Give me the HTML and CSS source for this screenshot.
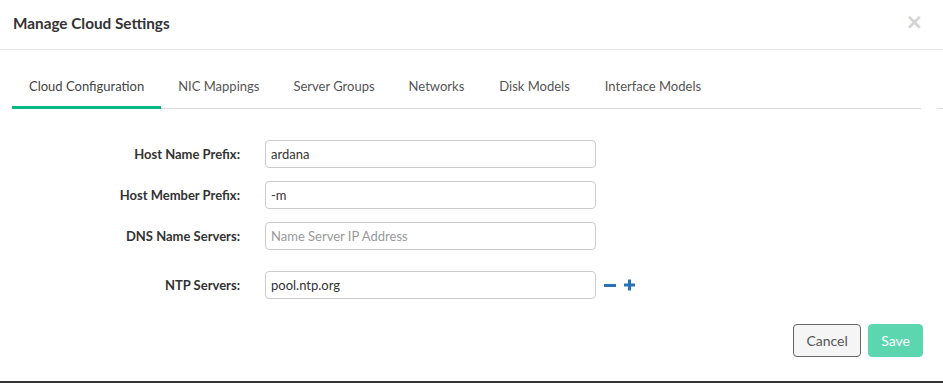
FILE: index.html
```html
<!DOCTYPE html>
<html lang="en">
<head>
  <meta charset="UTF-8" />
  <title>Manage Cloud Settings</title>
  <link rel="stylesheet" href="styles.css">
</head>
<body>
  <div class="modal">
    <div class="modal-header">
      <h4 class="modal-title">Manage Cloud Settings</h4>
      <span class="close">&times;</span>
    </div>

    <div class="tabs">
      <div class="tab active">Cloud Configuration</div>
      <div class="tab">NIC Mappings</div>
      <div class="tab">Server Groups</div>
      <div class="tab">Networks</div>
      <div class="tab">Disk Models</div>
      <div class="tab">Interface Models</div>
    </div>

    <div class="form">
      <label class="form-label">Host Name Prefix:</label>
      <input class="form-input" type="text" value="ardana">

      <label class="form-label">Host Member Prefix:</label>
      <input class="form-input" type="text" value="-m">

      <label class="form-label">DNS Name Servers:</label>
      <input class="form-input" type="text" placeholder="Name Server IP Address">

      <label class="form-label ntp">NTP Servers:</label>
      <div class="ntp-row">
        <input class="form-input" type="text" value="pool.ntp.org">
        <span class="icon-btn">
          <svg width="12" height="12" viewBox="0 0 12 12"><rect x="0" y="5" width="12" height="3" fill="#2a72b5"/></svg>
        </span>
        <span class="icon-btn">
          <svg width="12" height="12" viewBox="0 0 12 12"><rect x="0" y="4.5" width="11" height="3" fill="#2a72b5"/><rect x="4" y="0.5" width="3" height="11" fill="#2a72b5"/></svg>
        </span>
      </div>
    </div>

    <div class="footer">
      <button class="btn btn-cancel">Cancel</button>
      <button class="btn btn-save">Save</button>
    </div>
  </div>
</body>
</html>
```

FILE: styles.css
```css
body {
  margin: 0;
  font-family: Lato, "Open Sans", sans-serif;
  color: #333;
  background: #fff;
}

.modal {
  width: 943px;
  height: 383px;
  box-sizing: border-box;
  border-bottom: 2px solid #333;
  position: relative;
}

.modal-header {
  height: 50px;
  box-sizing: border-box;
  border-bottom: 1px solid #e5e5e5;
  display: flex;
  align-items: center;
  justify-content: space-between;
  padding: 0 20px 4px 13px;
}

.modal-title {
  margin: 0;
  font-size: 15.3px;
  font-weight: bold;
  color: #333;
}

.close {
  font-size: 21px;
  color: #c8c8c8;
  line-height: 1;
  font-family: "DejaVu Sans", sans-serif;
  font-weight: bold;
  opacity: 0.8;
}

.tabs {
  display: flex;
  margin: 16px 22px 0 12px;
  border-bottom: 1px solid #dcdcdc;
  position: relative;
}

.tabs::after {
  content: "";
  position: absolute;
  right: -22px;
  bottom: -1px;
  width: 6px;
  height: 1px;
  background: #dcdcdc;
}

.tab {
  padding: 12px 17px 12px;
  font-size: 13px;
  color: #555;
  border-bottom: 3px solid transparent;
  margin-bottom: -1px;
}

.tab:nth-child(n+5) {
  margin-left: 1px;
}

.tab.active {
  border-bottom-color: #00b982;
  color: #444;
}

.form {
  display: grid;
  grid-template-columns: 227px auto;
  column-gap: 25px;
  row-gap: 13px;
  align-items: center;
  margin: 31px 0 0 13px;
}

.form-label {
  text-align: right;
  font-size: 13px;
  font-weight: bold;
  color: #333;
}

.form-label.ntp,
.ntp-row {
  margin-top: 8px;
}

.form-input {
  width: 331px;
  height: 28px;
  box-sizing: border-box;
  border: 1px solid #ccc;
  border-radius: 4px;
  padding: 0 5px;
  font-family: Lato, sans-serif;
  font-size: 13px;
  color: #333;
}

.form-input::placeholder {
  color: #999;
}

.ntp-row {
  display: flex;
  align-items: center;
}

.icon-btn {
  display: flex;
  margin-left: 8px;
}

.footer {
  display: flex;
  justify-content: flex-end;
  gap: 7px;
  margin: 25px 20px 0 0;
}

.btn {
  height: 33px;
  border-radius: 4px;
  font-family: Lato, sans-serif;
  font-size: 14px;
  padding: 0 13px;
}

.btn-cancel {
  background: #f5f5f5;
  border: 1px solid #666;
  color: #555;
  padding: 0 12.5px;
}

.btn-save {
  background: #5cd6ae;
  border: 1px solid #5cd6ae;
  color: #fff;
  padding: 0 12px;
}
```
